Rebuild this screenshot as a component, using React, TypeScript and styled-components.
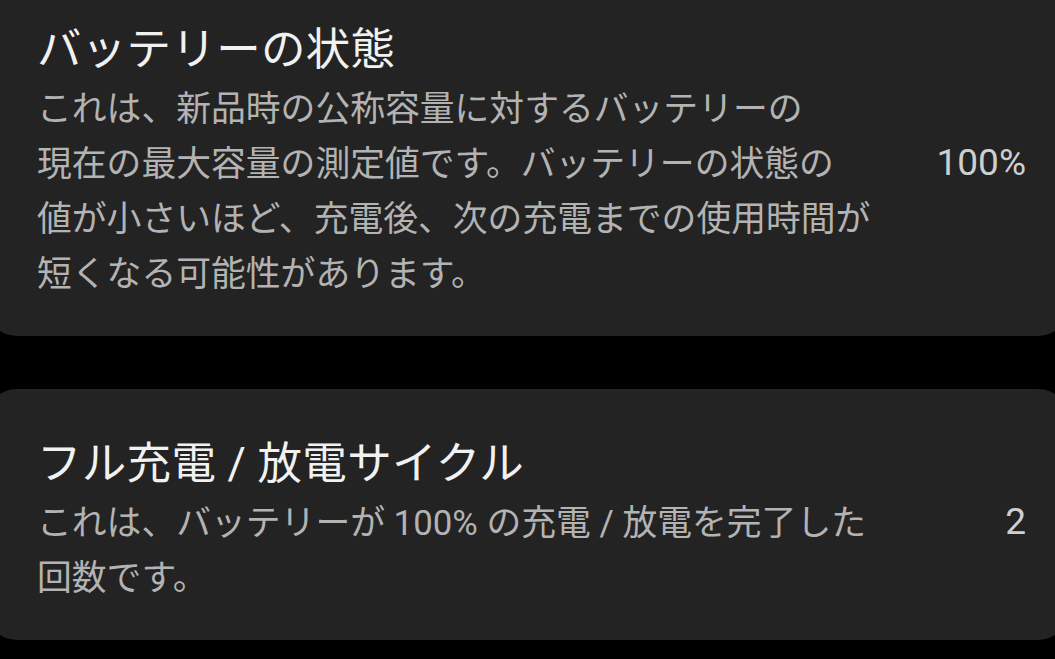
import styled, { createGlobalStyle } from 'styled-components';

const GlobalStyle = createGlobalStyle`
  html, body {
    margin: 0;
    padding: 0;
    background: #000;
    overflow: hidden;
  }
  body {
    font-family: Roboto, "Noto Sans CJK JP", sans-serif;
    -webkit-font-smoothing: antialiased;
  }
`;

type Item = {
  title: string;
  lines: string[];
  value: string;
};

const items: Item[] = [
  {
    title: 'バッテリーの状態',
    lines: [
      'これは、新品時の公称容量に対するバッテリーの',
      '現在の最大容量の測定値です。バッテリーの状態の',
      '値が小さいほど、充電後、次の充電までの使用時間が',
      '短くなる可能性があります。',
    ],
    value: '100%',
  },
  {
    title: 'フル充電 / 放電サイクル',
    lines: ['これは、バッテリーが 100% の充電 / 放電を完了した', '回数です。'],
    value: '2',
  },
];

export default function App() {
  return (
    <>
      <GlobalStyle />
      <List>
        {items.map(item => (
          <Card key={item.title}>
            <Texts>
              <Title>{item.title}</Title>
              <Description>
                {item.lines.map(line => (
                  <Line key={line}>{line}</Line>
                ))}
              </Description>
            </Texts>
            <Value>{item.value}</Value>
          </Card>
        ))}
      </List>
    </>
  );
}

const List = styled.div`
  display: flex;
  flex-direction: column;
  gap: 53px;
  margin: -25px -15px 0;
`;
const Card = styled.section`
  display: flex;
  align-items: center;
  gap: 24px;
  padding: 47px 44px 34px 52px;
  background: #232323;
  border-radius: 32px;
`;
const Texts = styled.div`
  flex: 1;
  min-width: 0;
`;
const Title = styled.h2`
  margin: 0 0 4px;
  font-size: 44.5px;
  font-weight: 400;
  line-height: 56px;
  color: #f1f1f1;
  letter-spacing: 0.3px;
`;
const Description = styled.div`
  font-size: 34.8px;
  line-height: 55px;
  color: #b3b3b3;
`;
const Line = styled.div`
  white-space: nowrap;
`;
const Value = styled.div`
  font-size: 37px;
  color: #cfcfcf;
  white-space: nowrap;
`;
